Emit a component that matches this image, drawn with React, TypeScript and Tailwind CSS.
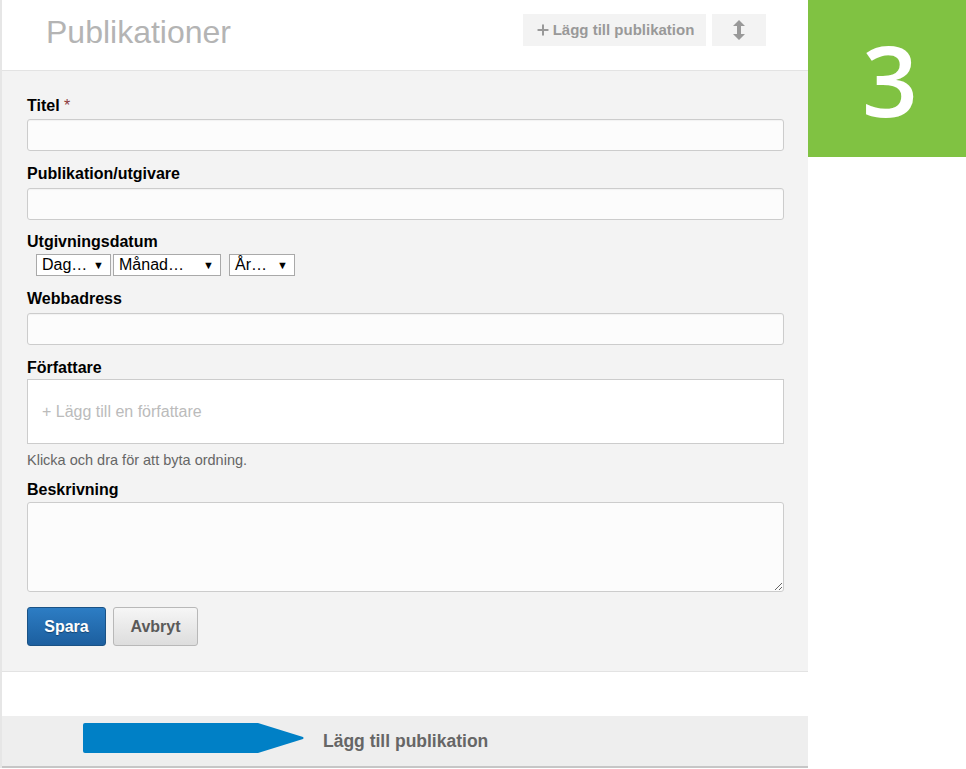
import { Plus } from "lucide-react";

const font = { fontFamily: '"Liberation Sans", Arial, sans-serif' };

function Label({ children }: { children: React.ReactNode }) {
  return <p className="text-[16px] font-bold leading-[18px] text-black">{children}</p>;
}

function TextInput() {
  return (
    <div className="h-[32px] w-[757px] rounded-[3px] border border-[#cccccc] bg-[#fcfcfc] shadow-[inset_0_1px_1px_rgba(0,0,0,0.04)]" />
  );
}

function FakeSelect({ label, w }: { label: string; w: string }) {
  return (
    <div
      className={`flex h-[22px] items-center justify-between border border-[#a9a9a9] bg-white pl-[5px] pr-[6px] text-[16px] leading-[18px] text-black ${w}`}
    >
      <span>{label}</span>
      <span className="text-[11px]">▼</span>
    </div>
  );
}

function Arrow() {
  return (
    <svg width="222" height="32" viewBox="0 0 222 32" className="mb-[6px] shrink-0">
      <path d="M2 1 H175 L220 15 Q221 16 220 17 L175 31 H2 Q0 31 0 29 V3 Q0 1 2 1 Z" fill="#0080c6" />
    </svg>
  );
}

export default function App() {
  return (
    <div className="flex min-h-[769px] w-[966px] items-start bg-white" style={font}>
      <div className="flex w-[808px] flex-col border-l-2 border-[#e6e6e6]">
        <div className="flex h-[71px] items-start justify-between border-b border-[#e3e3e3] bg-white pl-[44px] pr-[42px]">
          <h1 className="mt-[13px] text-[32px] leading-[38px] text-[#b4b4b4]">Publikationer</h1>
          <div className="mt-[14px] flex gap-[6px]">
            <button className="flex h-[32px] w-[183px] items-center justify-center gap-[2px] bg-[#f3f3f3] text-[15px] font-bold text-[#999999]">
              <Plus className="h-[16px] w-[16px]" strokeWidth={3} />
              Lägg till publikation
            </button>
            <button className="flex h-[32px] w-[54px] items-center justify-center bg-[#f3f3f3]">
              <svg width="12" height="20" viewBox="0 0 12 20">
                <path d="M6 0 L12 6 H8 V14 H12 L6 20 L0 14 H4 V6 H0 Z" fill="#999999" />
              </svg>
            </button>
          </div>
        </div>

        <div className="flex flex-col border-b border-[#e3e3e3] bg-[#f3f3f3] pb-[25px] pl-[25px] pt-[26px]">
          <Label>
            Titel <span className="font-normal text-[#8b3a3a]">*</span>
          </Label>
          <div className="mt-[4px]">
            <TextInput />
          </div>

          <div className="mt-[14px]">
            <Label>Publikation/utgivare</Label>
          </div>
          <div className="mt-[5px]">
            <TextInput />
          </div>

          <div className="mt-[13px]">
            <Label>Utgivningsdatum</Label>
          </div>
          <div className="ml-[9px] mt-[3px] flex">
            <FakeSelect label="Dag…" w="w-[75px]" />
            <div className="ml-[2px]">
              <FakeSelect label="Månad…" w="w-[108px]" />
            </div>
            <div className="ml-[8px]">
              <FakeSelect label="År…" w="w-[66px]" />
            </div>
          </div>

          <div className="mt-[14px]">
            <Label>Webbadress</Label>
          </div>
          <div className="mt-[5px]">
            <TextInput />
          </div>

          <div className="mt-[14px]">
            <Label>Författare</Label>
          </div>
          <div className="mt-[2px] flex h-[65px] w-[757px] items-center border border-[#cccccc] bg-white pl-[14px] text-[16px] text-[#bbbbbb]">
            + Lägg till en författare
          </div>
          <p className="mt-[8px] text-[14.5px] leading-[16px] text-[#666666]">Klicka och dra för att byta ordning.</p>

          <div className="mt-[13px]">
            <Label>Beskrivning</Label>
          </div>
          <div className="mt-[3px] h-[90px] w-[757px] rounded-[3px] border border-[#cccccc] bg-[#fcfcfc]">
            <textarea className="block h-full w-full resize-y bg-transparent outline-none" />
          </div>

          <div className="mt-[15px] flex gap-[7px]">
            <button className="h-[39px] w-[79px] rounded-[3px] border border-[#1a5285] bg-gradient-to-b from-[#2d7dc4] to-[#1c5f9f] text-[16px] font-bold text-white [text-shadow:0_1px_1px_rgba(0,0,0,0.35)]">
              Spara
            </button>
            <button className="h-[39px] w-[85px] rounded-[3px] border border-[#b8b8b8] bg-gradient-to-b from-[#f6f6f6] to-[#dddddd] text-[16px] font-bold text-[#5a5a5a]">
              Avbryt
            </button>
          </div>
        </div>

        <div className="h-[44px] bg-white" />

        <div className="flex h-[52px] items-center border-b-2 border-[#c6c6c6] bg-[#eeeeee] pl-[81px]">
          <Arrow />
          <span className="ml-[18px] text-[17.5px] font-bold text-[#666666]">Lägg till publikation</span>
        </div>
      </div>

      <div className="flex h-[157px] w-[158px] items-center justify-center bg-[#80c242] pl-[6px]">
        <span
          className="text-[98px] font-semibold leading-none text-white"
          style={{ fontFamily: '"Open Sans", "Noto Sans", sans-serif' }}
        >
          3
        </span>
      </div>
    </div>
  );
}
